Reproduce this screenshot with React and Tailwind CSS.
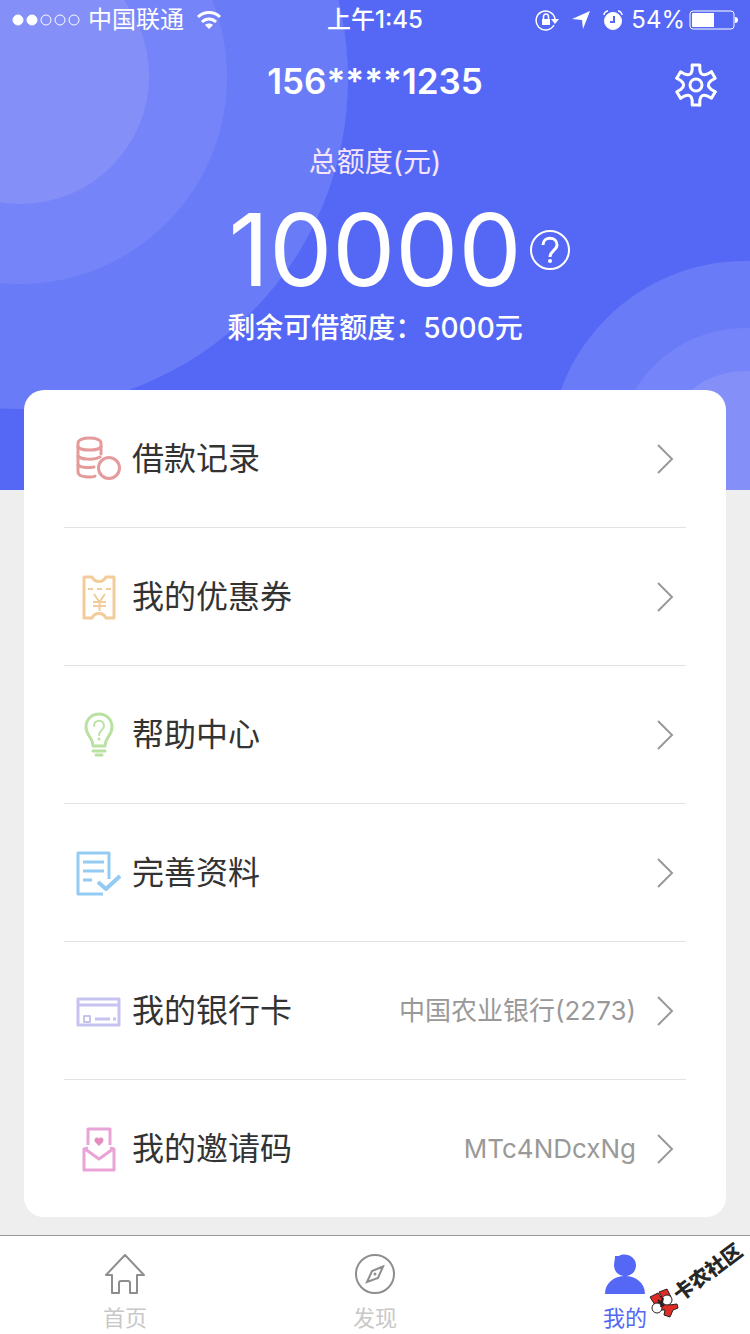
const GEAR_ANGLES = [0, 60, 120, 180, 240, 300];

function CoinsIcon() {
  return (
    <svg width="48" height="48" viewBox="0 0 48 48" fill="none" stroke="#e59a9c" strokeWidth="3" strokeLinecap="round">
      <path d="M27 19V8C27 5 22 3 15.500 3S4 5 4 8v29c0 4 7 5 12 5 2 0 4 0 5-1" />
      <path d="M4 12c3 4 20 4 23 0M4 21c3 4 17 4 22 1M4 30c3 3 11 3 16 2" />
      <circle cx="35" cy="33" r="10.500" />
    </svg>
  );
}

function CouponIcon() {
  return (
    <svg width="48" height="48" viewBox="0 0 48 48" fill="none" stroke="#f3cc9c" strokeWidth="3" strokeLinejoin="round">
      <path d="M10 4h8c3 6 11 6 14 0h8v41h-8c-3-6-11-6-14 0h-8z" />
      <path d="M14 16h5m4 0h5m4 0h5" strokeWidth="2" />
      <path d="M20 21l5.500 8 5.500-8M25.500 29v9M19 29h13M19 33h13" strokeWidth="2" />
    </svg>
  );
}

function BulbIcon() {
  return (
    <svg width="48" height="48" viewBox="0 0 48 48" fill="none" stroke="#b9e2a2" strokeWidth="3" strokeLinecap="round">
      <path d="M19 35c0-9-7-10-7-19 0-8 6-13 13-13s13 5 13 13c0 9-7 10-7 19z" strokeLinejoin="round" />
      <path d="M19 40h12M22 44h6" />
      <path d="M20 15c0-7 10-7 10 0 0 4-5 4-5 9" strokeWidth="2" />
      <circle cx="25" cy="28" r="1.500" fill="#b9e2a2" stroke="none" />
    </svg>
  );
}

function FormIcon() {
  return (
    <svg width="48" height="48" viewBox="0 0 48 48" fill="none" stroke="#93cbf3" strokeWidth="3" strokeLinejoin="round">
      <path d="M35 30V4H4v41h25" />
      <path d="M9 13h21M9 22h21M9 31h9" />
      <path d="M24 33l8 7 14-13" strokeWidth="4" />
    </svg>
  );
}

function BankCardIcon() {
  return (
    <svg width="48" height="48" viewBox="0 0 48 48" fill="none" stroke="#c6c3f0" strokeWidth="3" strokeLinejoin="round">
      <path d="M4 12h41v26H4zM4 18h41" />
      <path d="M10 29h6v6h-6z" strokeWidth="2" />
      <path d="M21 32h15M39 32h3" />
    </svg>
  );
}

function InviteIcon() {
  return (
    <svg width="48" height="48" viewBox="0 0 48 48" fill="none" stroke="#e9a3d6" strokeWidth="3" strokeLinejoin="round">
      <path d="M14 20V4h22v16" />
      <path d="M14 23l-4 1v21h30V24l-4-1M11 24l14 10 14-10" />
      <path d="M25 21l-4-4c-2-4 3-6 4-3 1-3 6-1 4 3z" fill="#e58bbf" stroke="none" />
    </svg>
  );
}

function GearIcon() {
  return (
    <svg width="44" height="44" viewBox="-22 -22 44 44" fill="none" stroke="#fff" strokeWidth="3" strokeLinecap="round" strokeLinejoin="round">
      {GEAR_ANGLES.map((angle) => (
        <path key={angle} d="M-3.8 -20H3.8V-15.500Q4.700 -8.100 11.520 -11.040L15.420 -13.290" transform={`rotate(${angle})`} />
      ))}
      <circle r="6" />
    </svg>
  );
}

function HomeIcon() {
  return (
    <svg width="40" height="40" viewBox="0 0 40 40" fill="none" stroke="#8e8e8e" strokeWidth="2" strokeLinejoin="round">
      <path d="M20 1L1 21h6v18h7V29q0-2 2-2h7q2 0 2 2v10h7V21h7z" />
    </svg>
  );
}

function CompassIcon() {
  return (
    <svg width="40" height="40" viewBox="0 0 40 40" fill="none" stroke="#8e8e8e" strokeWidth="2">
      <circle cx="20" cy="20" r="19" />
      <path d="M28 12.500l-11 4.500-5 11 11-4z" />
      <circle cx="20" cy="20" r="1.500" fill="#8e8e8e" stroke="none" />
    </svg>
  );
}

function PersonIcon() {
  return (
    <svg width="40" height="40" viewBox="0 0 40 40" fill="#5468f5">
      <path d="M10 2h4c7-4 17 1 17 9 0 6-4 11-11 11S9 17 9 11c0-2 1-5 1-9zM0 40c0-11 9-18 20-18s20 7 20 18z" />
    </svg>
  );
}

function ForumLogo() {
  return (
    <svg width="102" height="110" viewBox="0 -20 102 110" className="pointer-events-none absolute right-0 bottom-2 overflow-visible" role="img" aria-label="卡农社区">
      <g stroke="#222" strokeWidth="1">
        <path d="M2 61l8-4 5 7-8 5zM11 56l8-3 4 8-7 4z" fill="#e12c25" />
        <path d="M10 67l8-4 3 6 8-1 1 4-5 2-3 7-6-2 1-5-6 0z" fill="#e12c25" />
        <circle cx="19" cy="64" r="5" fill="#fff" />
        <circle cx="9" cy="72" r="5" fill="#fff" />
        <path d="M10 64l6 6M15 62l-2 9" strokeWidth="2" />
      </g>
      <text
        transform="translate(32 66) rotate(-37)"
        fontSize="20"
        fontWeight="900"
        fill="#262626"
        fontFamily="'Noto Sans CJK SC', sans-serif"
      >
        卡农社区
      </text>
    </svg>
  );
}

function StatusBar() {
  return (
    <div className="relative grid h-10 grid-cols-[1fr_auto_1fr] items-center px-3 text-2xl">
      <div className="flex items-center gap-2">
        <svg width="68" height="12" viewBox="0 0 68 12" fill="none" stroke="#fff">
          <circle cx="6" cy="6" r="5" fill="#fff" />
          <circle cx="20" cy="6" r="5" fill="#fff" />
          <circle cx="34" cy="6" r="5" />
          <circle cx="48" cy="6" r="5" />
          <circle cx="62" cy="6" r="5" />
        </svg>
        <span>中国联通</span>
        <svg width="26" height="20" viewBox="0 0 26 20" fill="none" stroke="#fff" strokeWidth="3" className="ml-1">
          <path d="M2 7c6-6 16-6 22 0M6 12c4-4 10-4 14 0" />
          <path d="M9 15c2-2 6-2 8 0l-4 4z" fill="#fff" stroke="none" />
        </svg>
      </div>
      <span className="font-medium">上午1:45</span>
      <div className="flex items-center justify-end">
        <svg width="24" height="22" viewBox="0 0 24 22" fill="none" stroke="#fff" strokeWidth="1.500">
          <path d="M19 16a9.500 9.500 0 1 1 1-6" />
          <path d="M16 10h8l-4 5z" fill="#fff" stroke="none" />
          <path d="M7 10h8v6H7z" fill="#fff" stroke="none" />
          <path d="M8.500 10V8c0-4 5-4 5 0v2" />
        </svg>
        <svg width="20" height="20" viewBox="0 0 20 20" fill="#fff" className="ml-3">
          <path d="M19 1L12 19l-1-9-10-1z" />
        </svg>
        <svg width="20" height="20" viewBox="0 0 20 20" fill="none" stroke="#fff" className="ml-3">
          <circle cx="10" cy="11" r="8.500" fill="#fff" />
          <path d="M1 5c0-2 2-4 4-4M15 1c2 0 4 2 4 4" strokeWidth="1.500" />
          <path d="M11 6v6H7" stroke="#5468f5" strokeWidth="2" />
        </svg>
        <span className="ml-2">54%</span>
        <svg width="49" height="20" viewBox="0 0 49 20" fill="none" stroke="#fff" className="ml-1">
          <rect x="1" y="1" width="44" height="18" rx="3" />
          <path d="M3 4q0-1 1-1h21v14H4q-1 0-1-1z" fill="#fff" stroke="none" />
          <path d="M46 7q3 0 3 3t-3 3z" fill="#fff" stroke="none" />
        </svg>
      </div>
    </div>
  );
}

function QuotaHeader() {
  return (
    <header className="relative h-[490px] overflow-hidden bg-[#5468f5] text-white">
      {/* soft rings behind the quota */}
      <svg className="absolute top-0 left-0" width="350" height="490" viewBox="0 0 350 490">
        <circle cx="18" cy="79" r="330" fill="#6a7bf8" />
        <circle cx="20" cy="77" r="207" fill="#7584f8" />
        <circle cx="21" cy="76" r="128" fill="#8490f7" />
      </svg>
      <svg className="absolute right-0 bottom-0" width="210" height="240" viewBox="0 0 210 240">
        <circle cx="205" cy="207" r="196" fill="#6a7bf8" />
        <circle cx="205" cy="207" r="129" fill="#7584f8" />
        <circle cx="205" cy="207" r="86" fill="#8490f7" />
      </svg>

      <StatusBar />

      <div className="relative grid h-[90px] grid-cols-[1fr_auto_1fr] items-center px-8">
        <h1 className="col-start-2 pb-2 text-[35px] font-semibold">156****1235</h1>
        <button type="button" aria-label="设置" className="justify-self-end">
          <GearIcon />
        </button>
      </div>

      <div className="relative text-center text-[28px] leading-10">
        <p className="mt-3 text-[#f6e4fb]">总额度(元)</p>
        <div className="mt-[18px] grid grid-cols-[1fr_auto_1fr] items-center">
          <span className="col-start-2 text-[100px] leading-[100px]">10000</span>
          <button type="button" aria-label="额度说明" className="ml-2 justify-self-start">
            <svg width="40" height="40" viewBox="0 0 40 40" fill="none" stroke="#fff" strokeWidth="2">
              <circle cx="20" cy="20" r="19" />
              <path d="M13 15c0-9 14-9 14 0 0 5-7 6-7 12" strokeWidth="3" />
              <circle cx="20" cy="31" r="2" fill="#fff" stroke="none" />
            </svg>
          </button>
        </div>
        <p className="mt-2 font-medium">剩余可借额度：5000元</p>
      </div>
    </header>
  );
}

const menu = [
  { label: "借款记录", icon: CoinsIcon },
  { label: "我的优惠券", icon: CouponIcon },
  { label: "帮助中心", icon: BulbIcon },
  { label: "完善资料", icon: FormIcon },
  { label: "我的银行卡", icon: BankCardIcon, value: "中国农业银行(2273)" },
  { label: "我的邀请码", icon: InviteIcon, value: "MTc4NDcxNg" },
];

const tabs = [
  { label: "首页", icon: HomeIcon },
  { label: "发现", icon: CompassIcon },
  { label: "我的", icon: PersonIcon, active: true },
];

export default function App() {
  return (
    <div className="flex min-h-screen flex-col bg-[#eeeeee] font-[Inter,'Noto_Sans_CJK_SC',sans-serif]">
      <QuotaHeader />

      <main className="relative mx-6 -mt-[100px] mb-4 rounded-[20px] bg-white px-10">
        <ul className="divide-y divide-[#e2e2e2]">
          {menu.map(({ label, icon: Icon, value }) => (
            <li key={label}>
              <a href="#" className="flex h-[137px] items-center pr-3 pl-[10px] text-[32px] text-[#333]">
                <Icon />
                <span className="ml-[10px]">{label}</span>
                <span className="ml-auto text-[26px] text-[#999]">{value}</span>
                <svg width="18" height="30" viewBox="0 0 18 30" fill="none" stroke="#999" strokeWidth="2" className="ml-5">
                  <path d="M2 1l14 14L2 29" />
                </svg>
              </a>
            </li>
          ))}
        </ul>
      </main>

      <nav className="relative mt-auto grid h-[99px] grid-cols-3 border-t border-[#999] bg-white text-[22px]">
        {tabs.map(({ label, icon: Icon, active }) => (
          <a
            key={label}
            href="#"
            className={`flex flex-col items-center gap-2 pt-[18px] leading-8 ${active ? "text-[#5468f5]" : "text-[#c8c8c8]"}`}
          >
            <Icon />
            <span>{label}</span>
          </a>
        ))}
        <ForumLogo />
      </nav>
    </div>
  );
}
